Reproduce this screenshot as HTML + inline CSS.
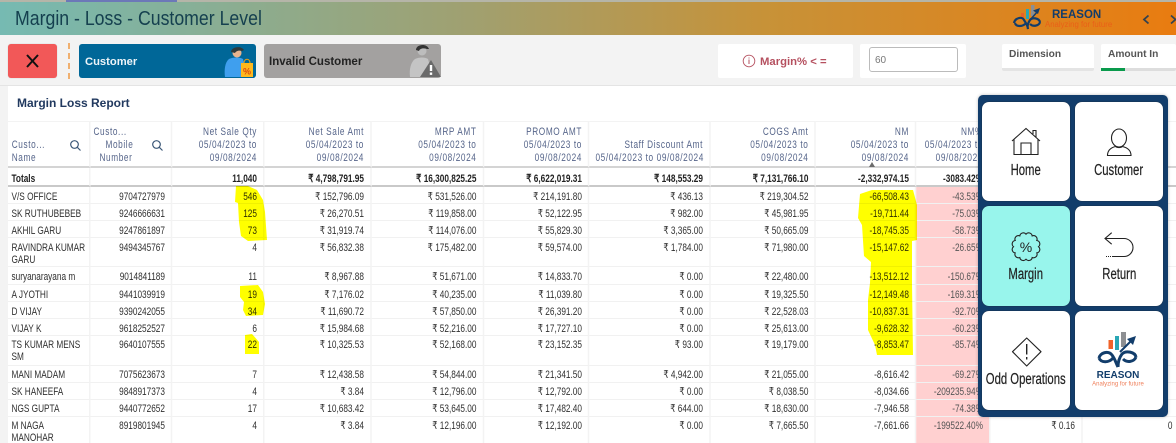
<!DOCTYPE html>
<html><head><meta charset="utf-8"><style>
*{box-sizing:border-box}
html,body{margin:0;padding:0;width:1176px;height:443px;overflow:hidden}
#r{position:absolute;left:0;top:0;width:1176px;height:443px;overflow:hidden;background:#f3f3f3;font-family:"Liberation Sans",sans-serif}
.a{position:absolute;white-space:nowrap}
table{position:absolute;left:8px;top:121px;width:1562px;transform:scaleX(.75);transform-origin:0 0;table-layout:fixed;border-collapse:separate;border-spacing:0;font-family:"Liberation Sans",sans-serif;font-size:11px;line-height:12px;color:#303030}
td,th{padding:3.5px 8px 0;text-align:right;vertical-align:top;white-space:nowrap;border-right:2.6px solid #f3f3f3;border-bottom:1px solid #f1f1f1;overflow:visible}
td:first-child{text-align:left;padding-left:4.67px;padding-right:2px}
th{font-weight:400;color:#56658a;letter-spacing:.8px;vertical-align:bottom;line-height:12.8px;padding-bottom:1.5px;padding-top:0;border-top:1px solid #f3f3f3;border-bottom:2px solid #d4d4d4}
.t td{font-weight:700;color:#222;border-bottom:2px solid #c9c9c9;padding-top:4.5px}
.p{background:#ffd0d0;color:#555}
.tile{position:absolute;width:88px;background:#fff;border-radius:7px;box-shadow:0 0 1px #222}
.lb{position:absolute;left:-30px;right:-30px;text-align:center;font-size:15.5px;line-height:18px;color:#222;white-space:nowrap}
.lb span{display:inline-block;transform:scaleX(.73);-webkit-text-stroke:.2px #222}
</style></head><body><div id="r">
<div class="a" style="left:0;top:0;width:1176px;height:2px;background:#b5b5a8"></div>
<div class="a" style="left:66px;top:0;width:111px;height:2px;background:#6c78b8"></div>
<div class="a" style="left:0;top:2px;width:1176px;height:33px;background:linear-gradient(90deg,#76bab2 0%,#a0a070 40%,#c79238 65%,#e97c10 100%)"></div>
<div class="a" style="left:15px;top:6px;font-size:20px;line-height:26px;color:#15404f;transform:scaleX(.885);transform-origin:0 0">Margin - Loss - Customer Level</div>

<div class="a" style="left:8px;top:44px;width:49px;height:34px;background:#f25858;border-radius:3px;box-shadow:0 0 1px #bbb"></div>
<div class="a" style="left:68px;top:43px;height:36px;border-left:2px dashed #f0b070"></div>
<div class="a" style="left:79px;top:44px;width:177px;height:34px;background:#006798;border-radius:3px"></div>
<div class="a" style="left:85px;top:55px;font-size:11.2px;font-weight:700;line-height:14px;color:#eef5f9">Customer</div>
<div class="a" style="left:264px;top:44px;width:177px;height:34px;background:#a3a1a0;border-radius:3px"></div>
<div class="a" style="left:269px;top:55px;font-size:11.5px;font-weight:700;line-height:14px;color:#222">Invalid Customer</div>

<div class="a" style="left:718px;top:44px;width:135px;height:34px;background:#fff;border-radius:2px"></div>
<div class="a" style="left:760px;top:55px;font-size:11.3px;font-weight:700;line-height:14px;color:#b5505f">Margin% &lt; =</div>
<div class="a" style="left:860px;top:44px;width:106px;height:34px;background:#fff;border-radius:2px"></div>
<div class="a" style="left:869px;top:47px;width:89px;height:25px;background:#fff;border:1px solid #bbb;border-radius:3px;font-size:10px;line-height:25px;padding-left:5px;color:#777">60</div>
<div class="a" style="left:1002px;top:44px;width:92px;height:27px;background:#fff;border-radius:2px;border-bottom:3px solid #e4e4e4;font-size:10.2px;font-weight:700;line-height:22px;padding-left:7px;color:#555">Dimension</div>
<div class="a" style="left:1101px;top:44px;width:75px;height:27px;background:#fff;border-radius:2px;border-bottom:3px solid #ddd;font-size:10.2px;font-weight:700;line-height:22px;padding-left:7px;color:#555">Amount In</div>
<div class="a" style="left:1101px;top:68px;width:24px;height:3px;background:#0a9a4c"></div>

<div class="a" style="left:0;top:85px;width:1176px;height:358px;background:#fff;border-top:1px solid #e4e4e4"></div>
<div class="a" style="left:0;top:86px;width:8px;height:357px;background:#f3f3f3"></div>
<div class="a" style="left:17px;top:95px;font-size:12px;font-weight:700;line-height:16px;color:#21395f">Margin Loss Report</div>

<table>
<colgroup><col style="width:110px"><col style="width:109.33px"><col style="width:122.67px"><col style="width:142.67px"><col style="width:150px"><col style="width:140.67px"><col style="width:161.33px"><col style="width:140.67px"><col style="width:134px"><col style="width:98.67px"><col style="width:122.67px"><col style="width:130px"></colgroup>
<tr style="height:47px"><th style="text-align:left;padding-left:5px">Custo...<br>Name</th><th style="text-align:left;padding-left:4px">Custo...<br><span style="margin-left:16px">Mobile</span><br><span style="margin-left:8px">Number</span></th><th>Net Sale Qty<br>05/04/2023 to<br>09/08/2024</th><th>Net Sale Amt<br>05/04/2023 to<br>09/08/2024</th><th>MRP AMT<br>05/04/2023 to<br>09/08/2024</th><th>PROMO AMT<br>05/04/2023 to<br>09/08/2024</th><th>Staff Discount Amt<br>05/04/2023 to 09/08/2024</th><th>COGS Amt<br>05/04/2023 to<br>09/08/2024</th><th>NM<br>05/04/2023 to<br>09/08/2024</th><th>NM%<br>05/04/2023 to<br>09/08/2024</th><th></th><th></th></tr>
<tr class="t" style="height:19px"><td>Totals</td><td></td><td>11,040</td><td>₹ 4,798,791.95</td><td>₹ 16,300,825.25</td><td>₹ 6,622,019.31</td><td>₹ 148,553.29</td><td>₹ 7,131,766.10</td><td>-2,332,974.15</td><td>-3083.42%</td><td></td><td></td></tr>
<tr style="height:17px"><td>V/S OFFICE</td><td>9704727979</td><td>546</td><td>₹ 152,796.09</td><td>₹ 531,526.00</td><td>₹ 214,191.80</td><td>₹ 436.13</td><td>₹ 219,304.52</td><td>-66,508.43</td><td class="p">-43.53%</td><td></td><td></td></tr>
<tr style="height:17px"><td>SK RUTHUBEBEB</td><td>9246666631</td><td>125</td><td>₹ 26,270.51</td><td>₹ 119,858.00</td><td>₹ 52,122.95</td><td>₹ 982.00</td><td>₹ 45,981.95</td><td>-19,711.44</td><td class="p">-75.03%</td><td></td><td></td></tr>
<tr style="height:17px"><td>AKHIL GARU</td><td>9247861897</td><td>73</td><td>₹ 31,919.74</td><td>₹ 114,076.00</td><td>₹ 55,829.30</td><td>₹ 3,365.00</td><td>₹ 50,665.09</td><td>-18,745.35</td><td class="p">-58.73%</td><td></td><td></td></tr>
<tr style="height:29px"><td>RAVINDRA KUMAR<br>GARU</td><td>9494345767</td><td>4</td><td>₹ 56,832.38</td><td>₹ 175,482.00</td><td>₹ 59,574.00</td><td>₹ 1,784.00</td><td>₹ 71,980.00</td><td>-15,147.62</td><td class="p">-26.65%</td><td></td><td></td></tr>
<tr style="height:18px"><td>suryanarayana m</td><td>9014841189</td><td>11</td><td>₹ 8,967.88</td><td>₹ 51,671.00</td><td>₹ 14,833.70</td><td>₹ 0.00</td><td>₹ 22,480.00</td><td>-13,512.12</td><td class="p">-150.67%</td><td></td><td></td></tr>
<tr style="height:17px"><td>A JYOTHI</td><td>9441039919</td><td>19</td><td>₹ 7,176.02</td><td>₹ 40,235.00</td><td>₹ 11,039.80</td><td>₹ 0.00</td><td>₹ 19,325.50</td><td>-12,149.48</td><td class="p">-169.31%</td><td></td><td></td></tr>
<tr style="height:17px"><td>D VIJAY</td><td>9390242055</td><td>34</td><td>₹ 11,690.72</td><td>₹ 57,850.00</td><td>₹ 26,391.20</td><td>₹ 0.00</td><td>₹ 22,528.03</td><td>-10,837.31</td><td class="p">-92.70%</td><td></td><td></td></tr>
<tr style="height:16px"><td>VIJAY K</td><td>9618252527</td><td>6</td><td>₹ 15,984.68</td><td>₹ 52,216.00</td><td>₹ 17,727.10</td><td>₹ 0.00</td><td>₹ 25,613.00</td><td>-9,628.32</td><td class="p">-60.23%</td><td></td><td></td></tr>
<tr style="height:30px"><td>TS KUMAR MENS<br>SM</td><td>9640107555</td><td>22</td><td>₹ 10,325.53</td><td>₹ 52,168.00</td><td>₹ 23,152.35</td><td>₹ 93.00</td><td>₹ 19,179.00</td><td>-8,853.47</td><td class="p">-85.74%</td><td></td><td></td></tr>
<tr style="height:17px"><td>MANI MADAM</td><td>7075623673</td><td>7</td><td>₹ 12,438.58</td><td>₹ 54,844.00</td><td>₹ 21,341.50</td><td>₹ 4,942.00</td><td>₹ 21,055.00</td><td>-8,616.42</td><td class="p">-69.27%</td><td></td><td></td></tr>
<tr style="height:17px"><td>SK HANEEFA</td><td>9848917373</td><td>4</td><td>₹ 3.84</td><td>₹ 12,796.00</td><td>₹ 12,792.00</td><td>₹ 0.00</td><td>₹ 8,038.50</td><td>-8,034.66</td><td class="p">-209235.94%</td><td></td><td></td></tr>
<tr style="height:17px"><td>NGS GUPTA</td><td>9440772652</td><td>17</td><td>₹ 10,683.42</td><td>₹ 53,645.00</td><td>₹ 17,482.40</td><td>₹ 644.00</td><td>₹ 18,630.00</td><td>-7,946.58</td><td class="p">-74.38%</td><td></td><td></td></tr>
<tr style="height:30px"><td>M NAGA<br>MANOHAR</td><td>8919801945</td><td>4</td><td>₹ 3.84</td><td>₹ 12,196.00</td><td>₹ 12,192.00</td><td>₹ 0.00</td><td>₹ 7,665.50</td><td>-7,661.66</td><td class="p">-199522.40%</td><td>₹ 0.16</td><td>0</td></tr>
</table>

<svg class="a" style="left:0;top:0;mix-blend-mode:multiply" width="1176" height="443" viewBox="0 0 1176 443">
<g fill="#ffff00">
<path d="M236 186L248 186L257 190L263 200L265 212L267 240L248 241L241 236L239 222L238 203L235 202Z"/>
<path d="M240 286L258 285L263 292L265 304L263 315L246 316L243 310L244 302L240 297Z"/>
<path d="M245 335L252 334L259 342L259 354L245 354Z"/>
<path d="M860 194L872 190L913 190L917 205L917 240L912 241L912 283L913 355L877 355L875 345L868 330L868 300L870 283L871 262L864 256L862 225L858 218Z"/>
</g>
</svg>

<svg class="a" style="left:0;top:0" width="1176" height="443" viewBox="0 0 1176 443">
<path d="M27 55L38 67M38 55L27 67" stroke="#111" stroke-width="2" fill="none"/>
<circle cx="237" cy="53" r="4.5" fill="#e9b48e"/>
<path d="M231 52c0-5 10-7 13-2l-2 1c-3-1-6 0-7 2z" fill="#2f3a3c"/>
<path d="M225 77c-1-7 0-15 4-18 4-2 11-2 14 0l2 8v10z" fill="#3f9fee"/>
<rect x="241" y="63" width="12" height="14" fill="#ffb81c"/>
<path d="M244 63c0-5 6-5 6 0" stroke="#e8a016" fill="none"/>
<text x="247" y="74.5" font-family="Liberation Sans,sans-serif" font-size="9" font-weight="700" fill="#d9480f" text-anchor="middle">%</text>
<circle cx="422" cy="51" r="4.5" fill="#bdbdbd"/>
<path d="M416 50c0-6 11-7 13-1l-2 0c-3-1-7-1-8 2z" fill="#333"/>
<path d="M410 77c-1-8 1-15 5-18 4-2 10-2 13 0l2 7v11z" fill="#c4c4c4"/>
<path d="M431 60L441 77L420 77Z" fill="#6a6a6a"/>
<rect x="429.800" y="65" width="2.400" height="6" fill="#fff"/><rect x="429.800" y="72.500" width="2.400" height="2.400" fill="#fff"/>
<circle cx="749" cy="61" r="5.800" fill="none" stroke="#b5505f" stroke-width=".9"/>
<path d="M749 59.500v4.500M749 57.500v1" stroke="#b5505f" stroke-width="1" fill="none"/>
<rect x="1021" y="13" width="3" height="6" fill="#e8622a"/>
<rect x="1026" y="9" width="3" height="10" fill="#2aa7b5"/>
<rect x="1031" y="5" width="3.500" height="11" fill="#8a8f95"/>
<path d="M1030 20L1038 11" stroke="#123d6b" stroke-width="1.500"/><path d="M1040 8L1033 10.500L1038 14Z" fill="#123d6b"/>
<path d="M1014 23c1-5 8-7 10-3 2 3 4 6 4 9M1040 22c-1-4-8-5-10-2-2 3-3 6-2 9M1015 23c1 4 8 4 11 0M1040 22c-1 4-7 5-10 2" stroke="#123d6b" stroke-width="2.200" fill="none"/>
<text x="1052" y="18" font-family="Liberation Sans,sans-serif" font-size="11.500" font-weight="700" fill="#123d6b">REASON</text>
<text x="1045" y="27" font-family="Liberation Sans,sans-serif" font-size="7.800" fill="#ea5f18">Analyzing for future</text>
<path d="M1148.500 15.500L1144 19.500L1148.500 23.500M1171 15.500L1175.500 19.500L1171 23.500" stroke="#35424e" stroke-width="1.800" fill="none"/>
<g stroke="#3c5878" stroke-width="1.200" fill="none"><circle cx="74.500" cy="144.500" r="3.800"/><path d="M77.300 147.300L80.500 150.500"/><circle cx="156.500" cy="144.500" r="3.800"/><path d="M159.300 147.300L162.500 150.500"/></g>
<path d="M869 167L872 162L875 167Z" fill="#6b6b6b"/>
</svg>

<div class="a" style="left:978px;top:95px;width:190px;height:322px;background:#123d6b;border-radius:5px;box-shadow:0 0 3px rgba(0,0,0,.25)"></div>
<div class="tile" style="left:982px;top:102px;height:99px"><div class="lb" style="top:60px"><span>Home</span></div></div>
<div class="tile" style="left:1075px;top:102px;height:99px"><div class="lb" style="top:60px"><span>Customer</span></div></div>
<div class="tile" style="left:982px;top:206px;height:100px;background:#98f5ec"><div class="lb" style="top:60px"><span>Margin</span></div></div>
<div class="tile" style="left:1075px;top:206px;height:100px"><div class="lb" style="top:60px"><span>Return</span></div></div>
<div class="tile" style="left:982px;top:311px;height:99px"><div class="lb" style="top:60px"><span>Odd Operations</span></div></div>
<div class="tile" style="left:1075px;top:311px;height:99px"></div>

<svg class="a" style="left:0;top:0" width="1176" height="443" viewBox="0 0 1176 443">
<g fill="none" stroke="#222" stroke-width="1.100">
<path d="M1012 141L1026 128.500L1040 141M1014 139V154.500H1038V139M1021 154.500V143H1031V154.500M1033 134V130.500H1036V137"/>
<ellipse cx="1119" cy="138" rx="7.500" ry="9"/>
<path d="M1107.500 155.500c0-6 4-8 8-9 2 1.500 5 1.500 7 0 4 1 8.500 3 8.500 9Z"/>
<path transform="translate(1026 246.700)" d="M12.500 0A3.500 3.500 0 0 1 10.800 6.200A3.500 3.500 0 0 1 6.200 10.800A3.500 3.500 0 0 1 0 12.500A3.500 3.500 0 0 1 -6.200 10.800A3.500 3.500 0 0 1 -10.800 6.200A3.500 3.500 0 0 1 -12.500 0A3.500 3.500 0 0 1 -10.800 -6.200A3.500 3.500 0 0 1 -6.200 -10.800A3.500 3.500 0 0 1 0 -12.500A3.500 3.500 0 0 1 6.200 -10.800A3.500 3.500 0 0 1 10.800 -6.200A3.500 3.500 0 0 1 12.500 0Z"/>
<path d="M1111.700 232.700L1105 238.500L1111.700 244.200M1105 238.500H1124a9 9 0 0 1 0 18H1113"/>
<path d="M1113 256.500H1105" stroke-dasharray="1 1"/>
<path d="M1026.700 338L1041 351.700L1026.700 366L1012.500 351.700Z" stroke-linejoin="round"/>
<path d="M1026.700 344V354.500M1026.700 357V359.500" stroke-width="1.400"/>
</g>
<text x="1026" y="252" font-family="Liberation Sans,sans-serif" font-size="14" fill="#222" text-anchor="middle">%</text>
<rect x="1108.500" y="340" width="4.500" height="9" fill="#f0632a"/>
<rect x="1115" y="336" width="4" height="14" fill="#2aa7b5"/>
<rect x="1121" y="332" width="5" height="15" fill="#8d8f92"/>
<path d="M1120 352L1133 339" stroke="#123d6b" stroke-width="2"/><path d="M1136 336L1127 339L1133 345Z" fill="#123d6b"/>
<path d="M1099 358c1-5 9-8 13-3 3 4 4 8 6 12M1136 357c-1-5-10-7-14-3-3 4-4 8-4 13M1099 358c2 5 10 5 14 0M1136 357c-2 5-9 6-13 2" stroke="#123d6b" stroke-width="3" fill="none"/>
<text x="1118" y="378" font-family="Liberation Sans,sans-serif" font-size="10" font-weight="700" fill="#123d6b" text-anchor="middle">REASON</text>
<text x="1118" y="385.500" font-family="Liberation Sans,sans-serif" font-size="6" fill="#ef7f5a" text-anchor="middle">Analyzing for future</text>
</svg>
</div></body></html>
